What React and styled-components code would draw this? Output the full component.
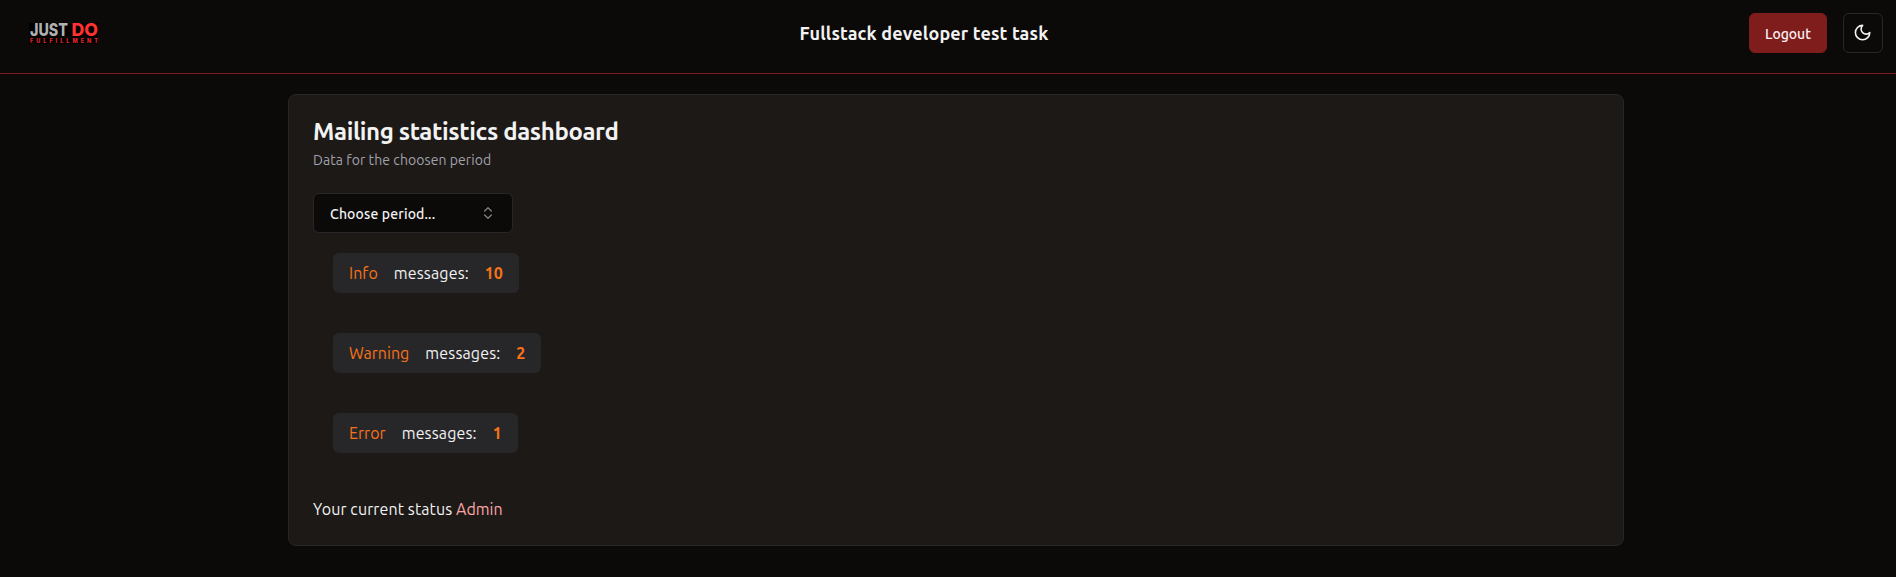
import React from "react";
import styled, { createGlobalStyle } from "styled-components";

const GlobalStyle = createGlobalStyle`
  *, *::before, *::after { box-sizing: border-box; }
  body {
    margin: 0;
    min-height: 100vh;
    background: #0c0a09;
    color: #f2f2f2;
    font-family: Ubuntu, "Open Sans", "Noto Sans", sans-serif;
    font-size: 16px;
    line-height: 24px;
  }
  h1, h3, p { margin: 0; }
`;

const Header = styled.header`
  display: flex;
  justify-content: space-between;
  height: 74px;
  padding: 13px 13px 0 29px;
  border-bottom: 1px solid #7f1d1d;
`;

const HeaderSide = styled.div`
  display: flex;
  align-items: center;
  gap: 16px;
  height: 40px;
`;

const Logo = styled.svg`
  display: block;
  width: 70px;
  height: 21px;
  overflow: visible;
`;

const Title = styled.h1`
  padding-top: 6px;
  font-size: 18px;
  line-height: 28px;
  font-weight: 700;
  letter-spacing: 0.15px;
`;

const Button = styled.button`
  display: inline-flex;
  align-items: center;
  justify-content: center;
  width: ${(p) => p.$width};
  height: 40px;
  padding: 0;
  border: 1px solid ${(p) => (p.$danger ? "#7f1d1d" : "#27272a")};
  border-radius: 6px;
  background: ${(p) => (p.$danger ? "#7f1d1d" : "#0c0a09")};
  color: ${(p) => (p.$danger ? "#fef2f2" : "#f2f2f2")};
  font: 500 14px/20px Ubuntu, "Open Sans", "Noto Sans", sans-serif;
`;

const ButtonLabel = styled.span`
  padding-top: 2px;
`;

const SelectButton = styled(Button)`
  justify-content: space-between;
  padding: 0 16px;
  letter-spacing: 0.14px;
`;

const Card = styled.main`
  width: 1336px;
  margin: 20px auto 0 288px;
  padding: 25px 24px 24px;
  border: 1px solid #27272a;
  border-radius: 8px;
  background: #1c1917;
`;

const CardHeader = styled.div`
  display: flex;
  flex-direction: column;
  gap: 6px;
  margin-bottom: 23px;
`;

const CardTitle = styled.h3`
  font-size: 24px;
  line-height: 24px;
  font-weight: 600;
  letter-spacing: -0.38px;
`;

const Description = styled.p`
  color: #a1a1aa;
  font-size: 14px;
  line-height: 20px;
  letter-spacing: 0.07px;
`;

const Stats = styled.div`
  display: flex;
  flex-direction: column;
  align-items: flex-start;
  gap: 40px;
  padding: 20px 20px 44px;
`;

const Stat = styled.div`
  display: flex;
  align-items: center;
  gap: 16px;
  height: 40px;
  padding: 0 16px;
  border-radius: 6px;
  background: #27272a;
`;

const StatText = styled.span`
  letter-spacing: 0.15px;
`;

const Accent = styled.span`
  color: #f97316;
  font-weight: ${(p) => (p.$bold ? 700 : 400)};
  letter-spacing: 0.03px;
`;

const Status = styled.p`
  letter-spacing: 0.11px;
  span { color: #fca5a5; letter-spacing: 0; }
`;

const stats = [
  { label: "Info", count: 10 },
  { label: "Warning", count: 2 },
  { label: "Error", count: 1 },
];

function BrandLogo() {
  return (
    <Logo viewBox="0 0 70 21" role="img" aria-label="Just Do Fulfillment">
      <rect width="69" height="21" fill="#000" />
      <g fontFamily="Inter, sans-serif" fontWeight="800">
        <text x="1" y="13.3" fontSize="17.5" fill="#b0b0b0" textLength="38" lengthAdjust="spacingAndGlyphs">JUST</text>
        <text x="42.5" y="13.3" fontSize="17.5" fill="#ff3131" textLength="26.5" lengthAdjust="spacingAndGlyphs">DO</text>
        <text x="1" y="20.3" fontSize="5.5" fill="#e8262a" textLength="68">FULFILLMENT</text>
      </g>
    </Logo>
  );
}

function MoonIcon() {
  return (
    <svg width="19.2" height="19.2" viewBox="0 0 24 24" fill="none" stroke="currentColor" strokeWidth="2" strokeLinecap="round" strokeLinejoin="round">
      <path d="M12 3a6 6 0 0 0 9 9 9 9 0 1 1-9-9Z" />
    </svg>
  );
}

function ChevronsIcon() {
  return (
    <svg width="16" height="16" viewBox="0 0 24 24" fill="none" stroke="currentColor" strokeWidth="2" strokeLinecap="round" strokeLinejoin="round" opacity="0.5">
      <path d="m7 15 5 5 5-5" />
      <path d="m7 9 5-5 5 5" />
    </svg>
  );
}

export default function App() {
  return (
    <>
      <GlobalStyle />
      <Header>
        <HeaderSide><BrandLogo /></HeaderSide>
        <Title>Fullstack developer test task</Title>
        <HeaderSide>
          <Button $danger $width="78px"><ButtonLabel>Logout</ButtonLabel></Button>
          <Button $width="40px" aria-label="Toggle theme"><MoonIcon /></Button>
        </HeaderSide>
      </Header>
      <Card>
        <CardHeader>
          <CardTitle>Mailing statistics dashboard</CardTitle>
          <Description>Data for the choosen period</Description>
        </CardHeader>
        <SelectButton $width="200px">
          <ButtonLabel>Choose period...</ButtonLabel>
          <ChevronsIcon />
        </SelectButton>
        <Stats>
          {stats.map((s) => (
            <Stat key={s.label}>
              <Accent>{s.label}</Accent>
              <StatText>messages:</StatText>
              <Accent $bold>{s.count}</Accent>
            </Stat>
          ))}
        </Stats>
        <Status>Your current status <span>Admin</span></Status>
      </Card>
    </>
  );
}
